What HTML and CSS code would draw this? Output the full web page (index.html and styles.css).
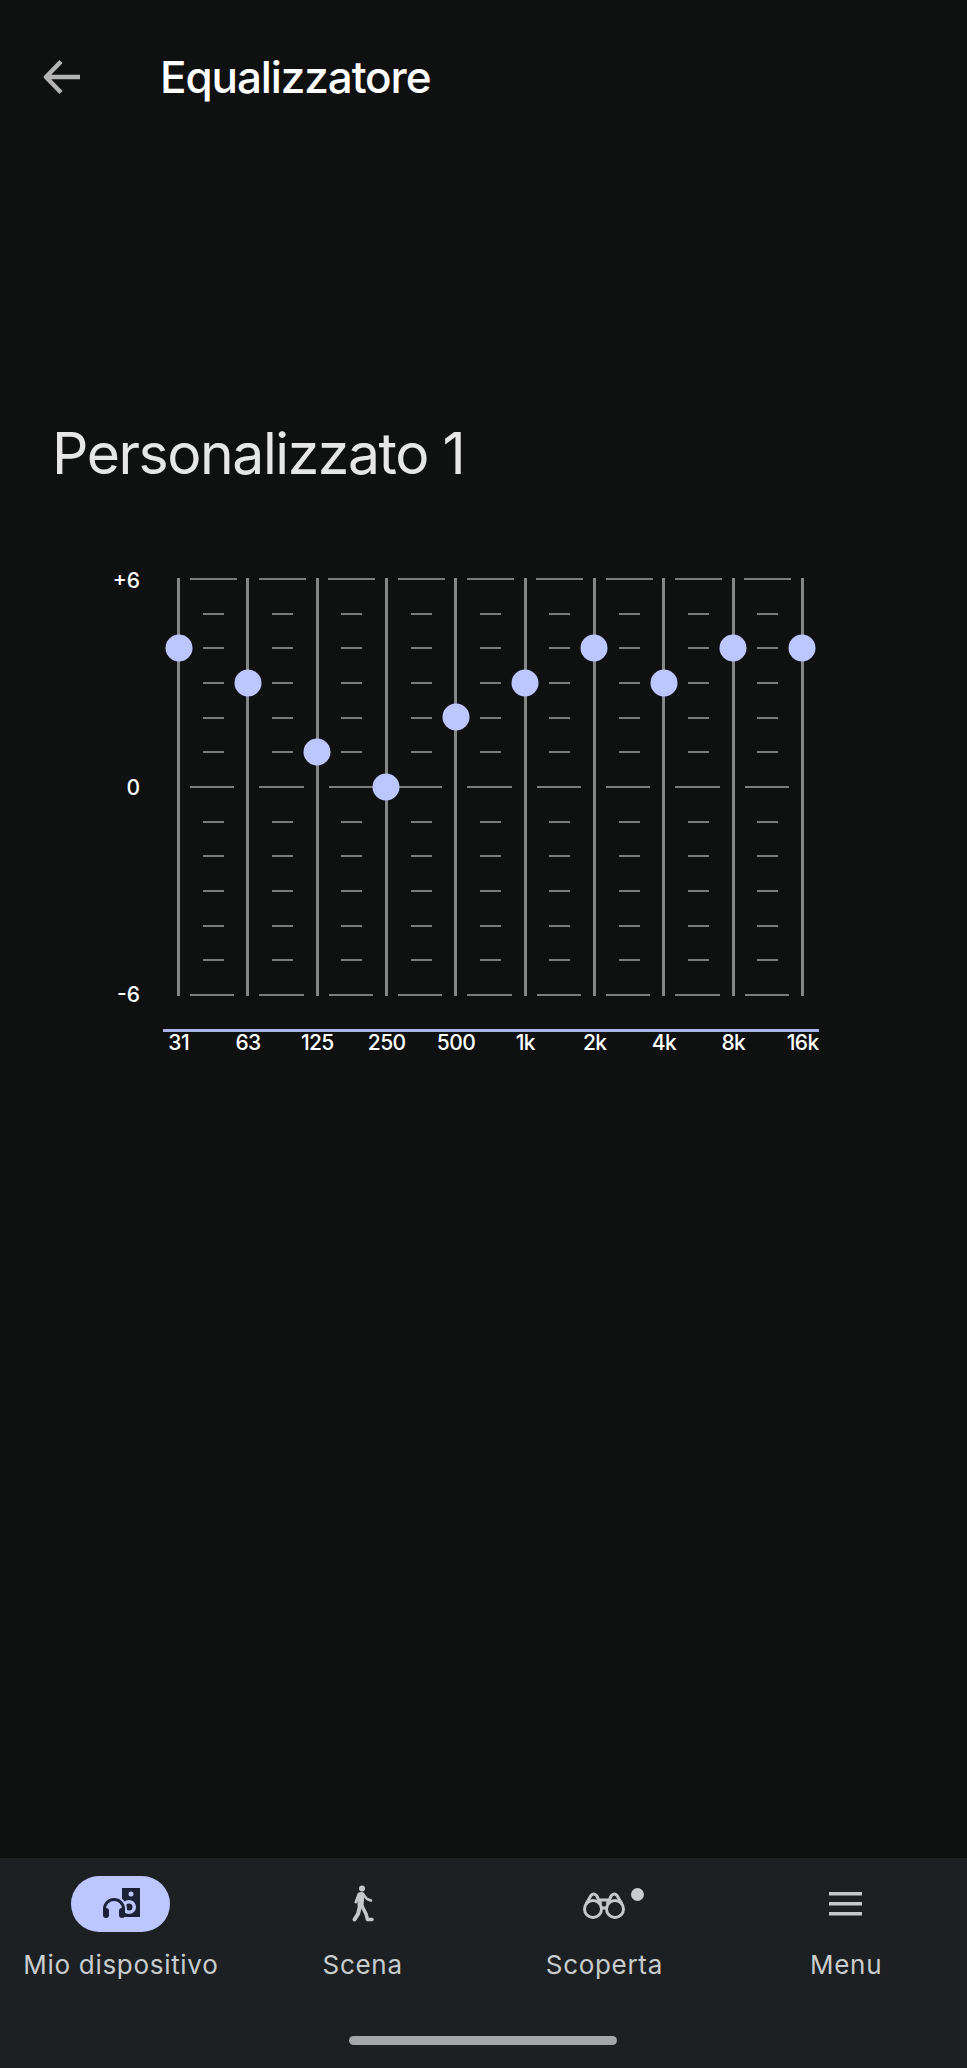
FILE: index.html
```html
<!DOCTYPE html>
<html lang="it">
<head>
    <meta charset="UTF-8">
    <meta name="viewport" content="width=device-width, initial-scale=1.0">
    <title>Equalizzatore</title>
    <link rel="stylesheet" href="styles.css">
</head>
<body>

<header class="topbar">
    <svg class="back-icon" width="38" height="38" viewBox="0 0 38 38">
        <path d="M37 19H4M18 3.500L3 19L18 34.500" fill="none" stroke="#b4b4b4" stroke-width="4.500" stroke-linejoin="round"/>
    </svg>
    <h1>Equalizzatore</h1>
</header>

<main class="content">
    <h2>Personalizzato 1</h2>

    <div class="eq">
        <div class="levels">
            <span>+6</span>
            <span>0</span>
            <span>-6</span>
        </div>
        <div class="bands">
            <div class="band"><span class="knob" style="top: 16.67%"></span></div>
            <div class="band"><span class="knob" style="top: 25%"></span></div>
            <div class="band"><span class="knob" style="top: 41.67%"></span></div>
            <div class="band"><span class="knob" style="top: 50%"></span></div>
            <div class="band"><span class="knob" style="top: 33.33%"></span></div>
            <div class="band"><span class="knob" style="top: 25%"></span></div>
            <div class="band"><span class="knob" style="top: 16.67%"></span></div>
            <div class="band"><span class="knob" style="top: 25%"></span></div>
            <div class="band"><span class="knob" style="top: 16.67%"></span></div>
            <div class="band last"><span class="knob" style="top: 16.67%"></span></div>
        </div>
    </div>

    <div class="baseline"></div>
    <div class="freqs">
        <span>31</span>
        <span>63</span>
        <span>125</span>
        <span>250</span>
        <span>500</span>
        <span>1k</span>
        <span>2k</span>
        <span>4k</span>
        <span>8k</span>
        <span>16k</span>
    </div>
</main>

<nav class="bottom-nav">
    <div class="nav-item">
        <div class="nav-icon active">
            <svg width="40" height="32" viewBox="0 0 40 32">
                <rect x="21" y="0" width="18" height="29" fill="#1c2236"/>
                <circle cx="30" cy="6" r="2.500" fill="#bcc6ff"/>
                <circle cx="28" cy="19" r="7" fill="#bcc6ff"/>
                <circle cx="28" cy="19" r="3.500" fill="#1c2236"/>
                <path d="M3.500 25V21a9.500 9.500 0 0 1 19 0v4" fill="none" stroke="#bcc6ff" stroke-width="7"/>
                <path d="M3.500 25V21a9.500 9.500 0 0 1 19 0v4" fill="none" stroke="#1c2236" stroke-width="3"/>
                <rect x="2" y="20" width="6" height="10" rx="3" fill="#1c2236"/>
                <rect x="18" y="20" width="6" height="10" rx="3" fill="#1c2236"/>
            </svg>
        </div>
        <span>Mio dispositivo</span>
    </div>
    <div class="nav-item">
        <div class="nav-icon">
            <svg width="24" height="40" viewBox="0 0 24 40" fill="none" stroke="#c4c8c8" stroke-linecap="round" stroke-linejoin="round">
                <circle cx="11" cy="4.500" r="3" fill="#c4c8c8" stroke="none"/>
                <path d="M10.500 11L9.500 21" stroke-width="6"/>
                <path d="M12 10L16 15L20 16.500" stroke-width="2.500"/>
                <path d="M8 10L5 18" stroke-width="3"/>
                <path d="M9 22L7 30L3.500 35.500" stroke-width="4"/>
                <path d="M11 22L15 30L16.500 35.500H21" stroke-width="3.500"/>
            </svg>
        </div>
        <span>Scena</span>
    </div>
    <div class="nav-item">
        <div class="nav-icon">
            <svg width="46" height="32" viewBox="0 0 46 32" fill="none" stroke="#c4c8c8" stroke-width="3" stroke-linejoin="round">
                <circle cx="12" cy="21" r="8.500"/>
                <circle cx="34" cy="21" r="8.500"/>
                <path d="M5 16L10 7.500Q12.500 4.500 15.500 7.500L20 16"/>
                <path d="M26 16L30.500 7.500Q33.500 4.500 36 7.500L41 16"/>
                <path d="M19 12H27M20 20H26"/>
            </svg>
            <span class="dot"></span>
        </div>
        <span>Scoperta</span>
    </div>
    <div class="nav-item">
        <div class="nav-icon">
            <svg width="34" height="24" viewBox="0 0 34 24" fill="#c4c8c8">
                <rect x="0" y="0" width="33" height="3.500"/>
                <rect x="0" y="10" width="33" height="3.500"/>
                <rect x="0" y="20" width="33" height="3.500"/>
            </svg>
        </div>
        <span>Menu</span>
    </div>
    <div class="home-bar"></div>
</nav>

</body>
</html>
```

FILE: styles.css
```css
* {
    box-sizing: border-box;
}
body {
    font-family: Inter, "Liberation Sans", sans-serif;
    background-color: #0f1111;
    color: white;
    margin: 0;
    height: 2068px;
    display: flex;
    flex-direction: column;
}
.topbar {
    display: flex;
    align-items: center;
    height: 153px;
    padding-left: 43px;
}
.back-icon {
    margin-right: 79px;
}
.topbar h1 {
    font-size: 44px;
    font-weight: 500;
    letter-spacing: -1.100px;
    margin: 0;
}
.content {
    flex: 1;
}
.content h2 {
    font-size: 57px;
    font-weight: 400;
    letter-spacing: -1.400px;
    line-height: 70px;
    color: #e6e6e6;
    margin: 266px 0 0 52px;
}
.eq {
    display: flex;
    margin-top: 89px;
}
.levels {
    width: 140px;
    margin-right: 37px;
    display: flex;
    flex-direction: column;
    justify-content: space-between;
    align-items: flex-end;
    font-size: 21px;
    font-weight: 500;
    line-height: 26px;
    margin-top: -10px;
    margin-bottom: -12px;
}
.bands {
    display: flex;
    height: 418px;
}
.band {
    position: relative;
    width: 69.330px;
    border-left: 3px solid #868686;
    background-image:
        linear-gradient(#7c7c7c, #7c7c7c),
        repeating-linear-gradient(to bottom, #7c7c7c 0, #7c7c7c 2px, transparent 2px, transparent 34.670px);
    background-size: 47px 2px, 21px 100%;
    background-position: center 0, center 0;
    background-repeat: no-repeat;
}
/* the long ticks at 0 and -6 */
.band::after {
    content: "";
    position: absolute;
    left: 10px;
    right: 12px;
    top: 0;
    bottom: 0;
    background:
        linear-gradient(#7c7c7c, #7c7c7c) 0 50% / 100% 2px no-repeat,
        linear-gradient(#7c7c7c, #7c7c7c) 0 100% / 100% 2px no-repeat;
}
.band.last {
    width: 3px;
    background: none;
}
.band.last::after {
    display: none;
}
.knob {
    position: absolute;
    left: -1.500px;
    width: 27px;
    height: 27px;
    border-radius: 50%;
    background-color: #bcc6ff;
    transform: translate(-50%, -50%);
    z-index: 1;
}
.baseline {
    width: 656px;
    height: 3px;
    margin: 33px 0 0 163px;
    background-color: #aab4ea;
}
.freqs {
    display: flex;
    margin-top: -2px;
    margin-left: 144px;
}
.freqs span {
    width: 69.330px;
    text-align: center;
    font-size: 21px;
    font-weight: 500;
    line-height: 26px;
    letter-spacing: -0.600px;
}
.bottom-nav {
    position: relative;
    height: 210px;
    background-color: #1c2022;
    display: grid;
    grid-template-columns: repeat(4, 1fr);
    align-items: start;
    padding-top: 18px;
}
.nav-item {
    display: flex;
    flex-direction: column;
    align-items: center;
    color: #c8cccc;
    font-size: 26px;
    letter-spacing: 0.700px;
    line-height: 32px;
}
.nav-icon {
    position: relative;
    width: 99px;
    height: 56px;
    border-radius: 28px;
    display: flex;
    align-items: center;
    justify-content: center;
    margin-bottom: 17px;
}
.nav-icon.active {
    background-color: #bcc6ff;
}
.dot {
    position: absolute;
    right: 10px;
    top: 12px;
    width: 13px;
    height: 13px;
    border-radius: 50%;
    background-color: #c8cccc;
}
.home-bar {
    position: absolute;
    left: 349px;
    bottom: 23px;
    width: 268px;
    height: 9px;
    border-radius: 5px;
    background-color: #a5a6a8;
}
```
